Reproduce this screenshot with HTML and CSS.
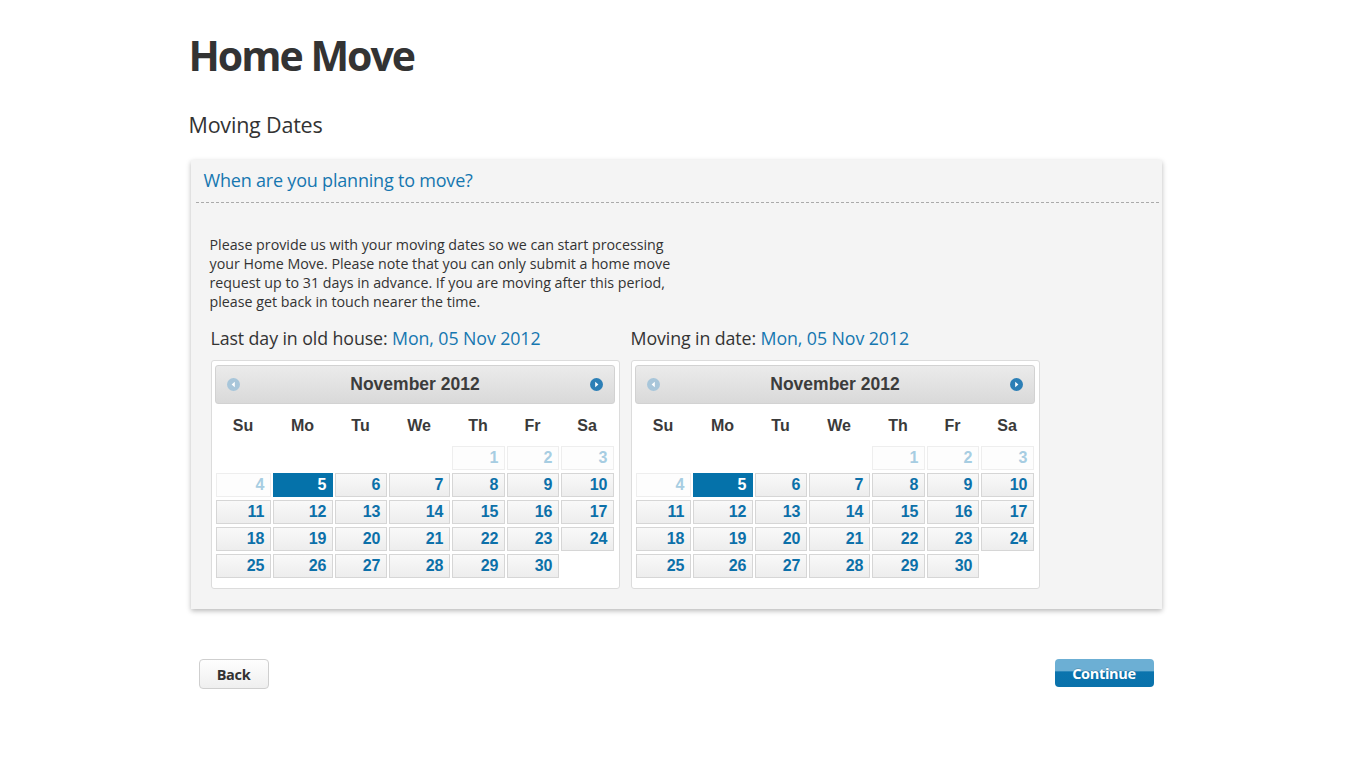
FILE: index.html
```html
<!DOCTYPE html>
<html lang="en">
<head>
<meta charset="utf-8">
<title>Home Move</title>
<link rel="stylesheet" href="styles.css">
</head>
<body>
<div class="page">
  <h1 class="title">Home Move</h1>
  <h2 class="subtitle">Moving Dates</h2>

  <section class="panel">
    <div class="panel-head">When are you planning to move?</div>
    <p class="intro">Please provide us with your moving dates so we can start processing your Home Move. Please note that you can only submit a home move request up to 31 days in advance. If you are moving after this period, please get back in touch nearer the time.</p>

    <div class="pickers">
      <div class="picker">
        <div class="picker-label">Last day in old house: <span class="date">Mon, 05 Nov 2012</span></div>
        <div class="cal">
          <div class="cal-head">
            <span class="nav prev"><svg width="13" height="13" viewBox="0 0 13 13"><circle cx="6.5" cy="6.5" r="6.5" fill="#a8c6da"/><path d="M7.8 3.8 L4.6 6.5 L7.8 9.2 Z" fill="#fff"/></svg></span>
            <span class="cal-title">November 2012</span>
            <span class="nav next"><svg width="13" height="13" viewBox="0 0 13 13"><circle cx="6.5" cy="6.5" r="6.5" fill="#2c7fb6"/><path d="M5.2 3.8 L8.4 6.5 L5.2 9.2 Z" fill="#fff"/></svg></span>
          </div>
          <div class="cal-grid weekdays">
            <span>Su</span><span>Mo</span><span>Tu</span><span>We</span><span>Th</span><span>Fr</span><span>Sa</span>
          </div>
          <div class="cal-grid days">
            <span class="empty"></span><span class="empty"></span><span class="empty"></span><span class="empty"></span>
            <span class="day off">1</span><span class="day off">2</span><span class="day off">3</span>
            <span class="day off">4</span><span class="day sel">5</span><span class="day">6</span><span class="day">7</span><span class="day">8</span><span class="day">9</span><span class="day">10</span>
            <span class="day">11</span><span class="day">12</span><span class="day">13</span><span class="day">14</span><span class="day">15</span><span class="day">16</span><span class="day">17</span>
            <span class="day">18</span><span class="day">19</span><span class="day">20</span><span class="day">21</span><span class="day">22</span><span class="day">23</span><span class="day">24</span>
            <span class="day">25</span><span class="day">26</span><span class="day">27</span><span class="day">28</span><span class="day">29</span><span class="day">30</span><span class="empty"></span>
          </div>
        </div>
      </div>

      <div class="picker">
        <div class="picker-label">Moving in date: <span class="date">Mon, 05 Nov 2012</span></div>
        <div class="cal">
          <div class="cal-head">
            <span class="nav prev"><svg width="13" height="13" viewBox="0 0 13 13"><circle cx="6.5" cy="6.5" r="6.5" fill="#a8c6da"/><path d="M7.8 3.8 L4.6 6.5 L7.8 9.2 Z" fill="#fff"/></svg></span>
            <span class="cal-title">November 2012</span>
            <span class="nav next"><svg width="13" height="13" viewBox="0 0 13 13"><circle cx="6.5" cy="6.5" r="6.5" fill="#2c7fb6"/><path d="M5.2 3.8 L8.4 6.5 L5.2 9.2 Z" fill="#fff"/></svg></span>
          </div>
          <div class="cal-grid weekdays">
            <span>Su</span><span>Mo</span><span>Tu</span><span>We</span><span>Th</span><span>Fr</span><span>Sa</span>
          </div>
          <div class="cal-grid days">
            <span class="empty"></span><span class="empty"></span><span class="empty"></span><span class="empty"></span>
            <span class="day off">1</span><span class="day off">2</span><span class="day off">3</span>
            <span class="day off">4</span><span class="day sel">5</span><span class="day">6</span><span class="day">7</span><span class="day">8</span><span class="day">9</span><span class="day">10</span>
            <span class="day">11</span><span class="day">12</span><span class="day">13</span><span class="day">14</span><span class="day">15</span><span class="day">16</span><span class="day">17</span>
            <span class="day">18</span><span class="day">19</span><span class="day">20</span><span class="day">21</span><span class="day">22</span><span class="day">23</span><span class="day">24</span>
            <span class="day">25</span><span class="day">26</span><span class="day">27</span><span class="day">28</span><span class="day">29</span><span class="day">30</span><span class="empty"></span>
          </div>
        </div>
      </div>
    </div>
  </section>

  <div class="actions">
    <button class="btn btn-back" type="button">Back</button>
    <button class="btn btn-continue" type="button">Continue</button>
  </div>
</div>
</body>
</html>
```

FILE: styles.css
```css
* { box-sizing: border-box; }

html, body {
  margin: 0;
  padding: 0;
  background: #fff;
}

body {
  font-family: "Open Sans", "Liberation Sans", sans-serif;
  color: #333;
}

.page {
  width: 972px;
  margin: 0 auto;
  padding-top: 28px;
}

.title {
  margin: 0 0 0 -1px;
  font-size: 41px;
  line-height: 54px;
  font-weight: 700;
  letter-spacing: -2px;
  color: #333;
}

.subtitle {
  margin: 28px 0 0 -1px;
  font-size: 21.5px;
  line-height: 30px;
  font-weight: 400;
  letter-spacing: -0.2px;
  color: #333;
}

.panel {
  margin: 20px 0 0 1px;
  width: 971px;
  background: #f4f4f4;
  box-shadow: 0 2px 5px rgba(0, 0, 0, 0.28);
  padding: 0 0 20px;
}

.panel-head {
  margin: 0 3px 0 5px;
  padding: 8px 0 9px 8px;
  font-size: 18px;
  line-height: 25px;
  letter-spacing: -0.2px;
  color: #1677b0;
  border-bottom: 1px dashed #aaa;
}

.intro {
  width: 462px;
  margin: 32px 0 0 19px;
  font-size: 14.25px;
  line-height: 19px;
  letter-spacing: 0;
  color: #333;
}

.pickers {
  display: flex;
  gap: 11px;
  margin: 15px 0 0 20px;
}

.picker-label {
  font-size: 17.8px;
  line-height: 24px;
  letter-spacing: -0.1px;
  color: #333;
  margin-bottom: 10px;
}

.date { color: #1677b0; }

.cal {
  width: 409px;
  background: #fff;
  border: 1px solid #dcdcdc;
  border-radius: 3px;
  padding: 4px 4px 10px 3px;
  font-family: "Liberation Sans", Arial, sans-serif;
}

.cal-head {
  display: flex;
  align-items: center;
  justify-content: space-between;
  height: 39px;
  padding: 0 10px 0 11px;
  background: linear-gradient(#ebebeb, #d9d9d9);
  border: 1px solid #d2d2d2;
  border-radius: 3px;
}

.nav { display: flex; width: 13px; height: 13px; }

.cal-title {
  font-size: 17.5px;
  font-weight: 700;
  color: #3c3c3c;
}

.cal-grid {
  display: grid;
  grid-template-columns: 55px 60px 52px 61px 53px 52px 53px;
  column-gap: 2px;
  margin-left: 1px;
}

.weekdays {
  height: 42px;
  align-items: center;
  text-align: center;
  font-size: 16px;
  font-weight: 700;
  color: #3a3a3a;
  padding-top: 1px;
}

.days {
  row-gap: 3px;
  grid-auto-rows: 24px;
}

.day {
  display: block;
  border: 1px solid #d6d6d6;
  background: linear-gradient(#f9f9f9, #ededed);
  text-align: right;
  padding-right: 5px;
  font-size: 16px;
  line-height: 22px;
  font-weight: 700;
  color: #0c70a9;
}

.day.off {
  background: #fdfdfd;
  border-color: #eeeeee;
  color: #a7cde2;
}

.day.sel {
  background: #0572aa;
  border-color: #0572aa;
  color: #fff;
}

.actions {
  display: flex;
  justify-content: space-between;
  align-items: flex-start;
  margin-top: 50px;
  padding: 0 8px 0 9px;
}

.btn {
  font-family: "Open Sans", "Liberation Sans", sans-serif;
  font-weight: 700;
  font-size: 14.5px;
  letter-spacing: -0.3px;
  border-radius: 4px;
  cursor: pointer;
}

.btn-back {
  width: 70px;
  height: 30px;
  border: 1px solid #cfcfcf;
  background: linear-gradient(#fefefe, #efefef);
  color: #333;
  padding: 0;
}

.btn-continue {
  width: 99px;
  height: 28px;
  border: 0;
  color: #fff;
  padding: 0;
  background: linear-gradient(#6cafd4 0%, #6cafd4 42%, #0b74ae 46%, #0a72ab 100%);
  text-shadow: 0 -1px 0 rgba(0,0,0,0.15);
}
```
